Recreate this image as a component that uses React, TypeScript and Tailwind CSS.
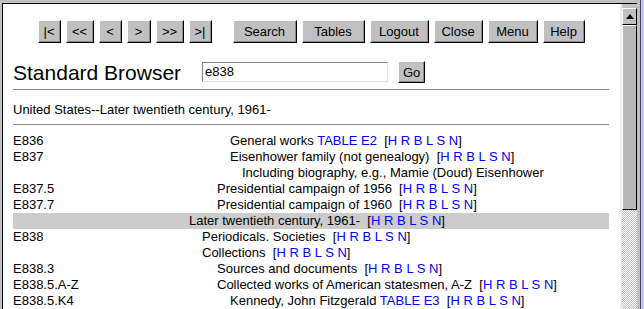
import React from "react";

type Row = {
  code: string;
  indent: string;
  text: string;
  table?: string;
  links?: boolean;
  current?: boolean;
};

const ROWS: Row[] = [
  { code: "E836", indent: "pl-[41px]", text: "General works", table: "TABLE E2", links: true },
  { code: "E837", indent: "pl-[41px]", text: "Eisenhower family (not genealogy)", links: true },
  { code: "", indent: "pl-[53px]", text: "Including biography, e.g., Mamie (Doud) Eisenhower" },
  { code: "E837.5", indent: "pl-[28px]", text: "Presidential campaign of 1956", links: true },
  { code: "E837.7", indent: "pl-[28px]", text: "Presidential campaign of 1960", links: true },
  { code: "", indent: "pl-0", text: "Later twentieth century, 1961-", links: true, current: true },
  { code: "E838", indent: "pl-[13px]", text: "Periodicals. Societies", links: true },
  { code: "", indent: "pl-[13px]", text: "Collections", links: true },
  { code: "E838.3", indent: "pl-[28px]", text: "Sources and documents", links: true },
  { code: "E838.5.A-Z", indent: "pl-[28px]", text: "Collected works of American statesmen, A-Z", links: true },
  { code: "E838.5.K4", indent: "pl-[41px]", text: "Kennedy, John Fitzgerald", table: "TABLE E3", links: true },
];

const NAV = [
  { label: "|<", w: "w-[23px]" },
  { label: "<<", w: "w-[28px]" },
  { label: "<", w: "w-[23px]" },
  { label: ">", w: "w-[24px]" },
  { label: ">>", w: "w-[28px]" },
  { label: ">|", w: "w-[23px]" },
];

const ACTIONS = [
  { label: "Search", w: "w-[64px]" },
  { label: "Tables", w: "w-[63px]" },
  { label: "Logout", w: "w-[59px]" },
  { label: "Close", w: "w-[49px]" },
  { label: "Menu", w: "w-[50px]" },
  { label: "Help", w: "w-[42px]" },
];

function MotifButton({ label, w, h = "h-[23px]" }: { label: string; w: string; h?: string }) {
  return (
    <button
      type="button"
      className={`${w} ${h} flex shrink-0 items-center justify-center border border-t-white border-l-white border-r-black border-b-black bg-[#c0c0c0] text-[13px] leading-none text-black shadow-[inset_-1px_-1px_0_#8a8a8a]`}
    >
      {label}
    </button>
  );
}

function Links() {
  const letters = ["H", "R", "B", "L", "S", "N"];
  return (
    <>
      {"\u00a0 ["}
      {letters.map((l, i) => (
        <React.Fragment key={l}>
          <a className="text-[#0000ee]">{l}</a>
          {i < letters.length - 1 ? " " : null}
        </React.Fragment>
      ))}
      {"]"}
    </>
  );
}

function Scrollbar() {
  return (
    <div className="flex w-[17px] shrink-0 flex-col border-l-2 border-[#ececec] bg-[#c0c0c0]">
      <div className="mt-[4px] flex h-[17px] items-center justify-center border border-t-white border-l-white border-r-black border-b-black bg-[#c0c0c0]">
        <svg width="8" height="5" viewBox="0 0 8 5" aria-hidden>
          <path d="M4 0 L8 5 L0 5 Z" fill="#000" />
        </svg>
      </div>
      <div className="h-[185px] border border-t-white border-l-white border-r-black border-b-black bg-[#b8b8b8]" />
      <div className="flex-1 [background:repeating-conic-gradient(#c0c0c0_0_25%,#ffffff_0_50%)_0_0/2px_2px]" />
    </div>
  );
}

export default function App() {
  return (
    <div className="flex h-[309px] w-[644px] overflow-hidden bg-[#c0c0c0] font-['Liberation_Sans',Arial,sans-serif] text-[13px] text-black">
      <div className="ml-[2px] mt-[3px] flex min-w-0 flex-1 border-l border-t border-black bg-white">
        <main className="min-w-0 flex-1 pl-[10px] pr-[11px]">
          <div className="mt-[16px] flex justify-center">
            <div className="flex gap-[5px]">
              {NAV.map((b) => (
                <MotifButton key={b.label} label={b.label} w={b.w} />
              ))}
            </div>
            <div className="ml-[21px] flex gap-[5px]">
              {ACTIONS.map((b) => (
                <MotifButton key={b.label} label={b.label} w={b.w} />
              ))}
            </div>
          </div>

          <div className="mt-[18px] flex h-[22px] items-center">
            <h1 className="text-[21px] leading-none">Standard Browser</h1>
            <div className="ml-[21px] flex h-[20px] w-[186px] items-center border border-t-[#808080] border-l-[#808080] border-r-[#e0e0e0] border-b-[#e0e0e0] bg-white px-[2px] text-[13px]">
              e838
            </div>
            <div className="ml-[10px]">
              <MotifButton label="Go" w="w-[27px]" h="h-[22px]" />
            </div>
          </div>

          <div className="mt-[6px] h-px bg-[#8a8a8a]" />
          <p className="mt-[12px] leading-4">United States--Later twentieth century, 1961-</p>
          <div className="mt-[6px] h-px bg-[#8a8a8a]" />

          <div className="mt-[8px]">
            {ROWS.map((r, i) => (
              <div
                key={i}
                className={`grid h-4 grid-cols-[176px_1fr] whitespace-nowrap leading-4 ${r.current ? "bg-[#cccccc]" : ""}`}
              >
                <span>{r.code}</span>
                <span className={r.indent}>
                  {r.text}
                  {r.table ? (
                    <>
                      {" "}
                      <a className="text-[#0000ee]">{r.table}</a>
                    </>
                  ) : null}
                  {r.links ? <Links /> : null}
                </span>
              </div>
            ))}
          </div>
        </main>
        <Scrollbar />
      </div>
      <div className="flex w-[7px] shrink-0">
        <div className="w-[3px] bg-[#c0c0c0]" />
        <div className="w-[4px] border-l border-[#404060] bg-[#c8c8f8]" />
      </div>
    </div>
  );
}
